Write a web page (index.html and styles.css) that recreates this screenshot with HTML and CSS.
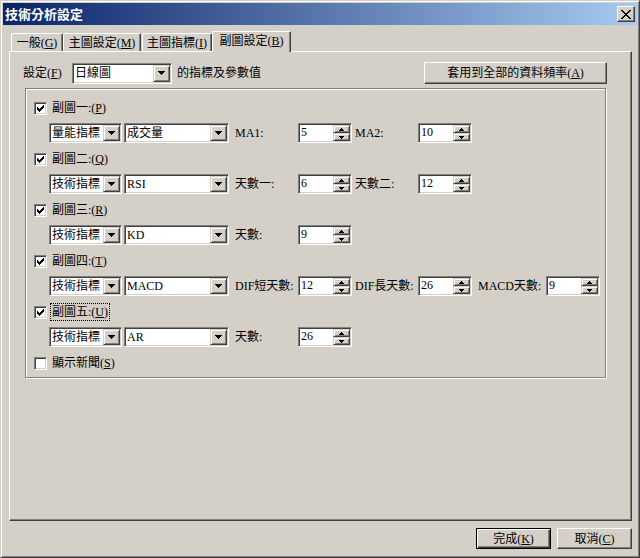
FILE: index.html
```html
<!DOCTYPE html>
<html>
<head>
<meta charset="utf-8">
<link rel="stylesheet" href="styles.css">
</head>
<body>
<div class="window">
  <div class="titlebar">
    <span class="title">技術分析設定</span>
    <span class="close"><svg width="10" height="9" viewBox="0 0 10 9"><path d="M0 0h2v1H0zM8 0h2v1H8zM1 1h2v1H1zM7 1h2v1H7zM2 2h2v1H2zM6 2h2v1H6zM3 3h4v1H3zM4 4h2v1H4zM3 5h4v1H3zM2 6h2v1H2zM6 6h2v1H6zM1 7h2v1H1zM7 7h2v1H7zM0 8h2v1H0zM8 8h2v1H8z"/></svg></span>
  </div>
  <div class="client">
    <div class="tabs">
      <div class="tab t1">一般(<u>G</u>)</div>
      <div class="tab t2">主圖設定(<u>M</u>)</div>
      <div class="tab t3">主圖指標(<u>I</u>)</div>
      <div class="tab t4 sel">副圖設定(<u>B</u>)</div>
    </div>
    <div class="panel">
      <div class="toprow">
        <span class="set-lbl">設定(<u>F</u>)</span>
        <div class="combo c-freq"><span class="val">日線圖</span><span class="dd"><svg width="7" height="4" viewBox="0 0 7 4"><path d="M0 0h7v1H0zM1 1h5v1H1zM2 2h3v1H2zM3 3h1v1H3z"/></svg></span></div>
        <span class="after">的指標及參數值</span>
        <div class="btn apply">套用到全部的資料頻率(<u>A</u>)</div>
      </div>
      <div class="group">
        <div class="cbrow"><span class="chk"><svg width="7" height="7" viewBox="0 0 7 7"><path d="M0 2h1v3H0zM1 3h1v3H1zM2 4h1v3H2zM3 3h1v3H3zM4 2h1v3H4zM5 1h1v3H5zM6 0h1v3H6z"/></svg></span><span class="cblbl">副圖一:(<u>P</u>)</span></div>
        <div class="ctlrow">
          <div class="combo c-type"><span class="val">量能指標</span><span class="dd"><svg width="7" height="4" viewBox="0 0 7 4"><path d="M0 0h7v1H0zM1 1h5v1H1zM2 2h3v1H2zM3 3h1v1H3z"/></svg></span></div>
          <div class="combo c-ind"><span class="val">成交量</span><span class="dd"><svg width="7" height="4" viewBox="0 0 7 4"><path d="M0 0h7v1H0zM1 1h5v1H1zM2 2h3v1H2zM3 3h1v1H3z"/></svg></span></div>
          <span class="plbl l1">MA1:</span>
          <div class="spin"><span class="v">5</span><span class="sbs"><span class="sb"><svg width="5" height="3" viewBox="0 0 5 3"><path d="M2 0h1v1H2zM1 1h3v1H1zM0 2h5v1H0z"/></svg></span><span class="sb"><svg width="5" height="3" viewBox="0 0 5 3"><path d="M0 0h5v1H0zM1 1h3v1H1zM2 2h1v1H2z"/></svg></span></span></div>
          <span class="plbl l2">MA2:</span>
          <div class="spin"><span class="v">10</span><span class="sbs"><span class="sb"><svg width="5" height="3" viewBox="0 0 5 3"><path d="M2 0h1v1H2zM1 1h3v1H1zM0 2h5v1H0z"/></svg></span><span class="sb"><svg width="5" height="3" viewBox="0 0 5 3"><path d="M0 0h5v1H0zM1 1h3v1H1zM2 2h1v1H2z"/></svg></span></span></div>
        </div>
        <div class="cbrow"><span class="chk"><svg width="7" height="7" viewBox="0 0 7 7"><path d="M0 2h1v3H0zM1 3h1v3H1zM2 4h1v3H2zM3 3h1v3H3zM4 2h1v3H4zM5 1h1v3H5zM6 0h1v3H6z"/></svg></span><span class="cblbl">副圖二:(<u>Q</u>)</span></div>
        <div class="ctlrow">
          <div class="combo c-type"><span class="val">技術指標</span><span class="dd"><svg width="7" height="4" viewBox="0 0 7 4"><path d="M0 0h7v1H0zM1 1h5v1H1zM2 2h3v1H2zM3 3h1v1H3z"/></svg></span></div>
          <div class="combo c-ind"><span class="val">RSI</span><span class="dd"><svg width="7" height="4" viewBox="0 0 7 4"><path d="M0 0h7v1H0zM1 1h5v1H1zM2 2h3v1H2zM3 3h1v1H3z"/></svg></span></div>
          <span class="plbl l1">天數一:</span>
          <div class="spin"><span class="v">6</span><span class="sbs"><span class="sb"><svg width="5" height="3" viewBox="0 0 5 3"><path d="M2 0h1v1H2zM1 1h3v1H1zM0 2h5v1H0z"/></svg></span><span class="sb"><svg width="5" height="3" viewBox="0 0 5 3"><path d="M0 0h5v1H0zM1 1h3v1H1zM2 2h1v1H2z"/></svg></span></span></div>
          <span class="plbl l2">天數二:</span>
          <div class="spin"><span class="v">12</span><span class="sbs"><span class="sb"><svg width="5" height="3" viewBox="0 0 5 3"><path d="M2 0h1v1H2zM1 1h3v1H1zM0 2h5v1H0z"/></svg></span><span class="sb"><svg width="5" height="3" viewBox="0 0 5 3"><path d="M0 0h5v1H0zM1 1h3v1H1zM2 2h1v1H2z"/></svg></span></span></div>
        </div>
        <div class="cbrow"><span class="chk"><svg width="7" height="7" viewBox="0 0 7 7"><path d="M0 2h1v3H0zM1 3h1v3H1zM2 4h1v3H2zM3 3h1v3H3zM4 2h1v3H4zM5 1h1v3H5zM6 0h1v3H6z"/></svg></span><span class="cblbl">副圖三:(<u>R</u>)</span></div>
        <div class="ctlrow">
          <div class="combo c-type"><span class="val">技術指標</span><span class="dd"><svg width="7" height="4" viewBox="0 0 7 4"><path d="M0 0h7v1H0zM1 1h5v1H1zM2 2h3v1H2zM3 3h1v1H3z"/></svg></span></div>
          <div class="combo c-ind"><span class="val">KD</span><span class="dd"><svg width="7" height="4" viewBox="0 0 7 4"><path d="M0 0h7v1H0zM1 1h5v1H1zM2 2h3v1H2zM3 3h1v1H3z"/></svg></span></div>
          <span class="plbl l1">天數:</span>
          <div class="spin"><span class="v">9</span><span class="sbs"><span class="sb"><svg width="5" height="3" viewBox="0 0 5 3"><path d="M2 0h1v1H2zM1 1h3v1H1zM0 2h5v1H0z"/></svg></span><span class="sb"><svg width="5" height="3" viewBox="0 0 5 3"><path d="M0 0h5v1H0zM1 1h3v1H1zM2 2h1v1H2z"/></svg></span></span></div>
        </div>
        <div class="cbrow"><span class="chk"><svg width="7" height="7" viewBox="0 0 7 7"><path d="M0 2h1v3H0zM1 3h1v3H1zM2 4h1v3H2zM3 3h1v3H3zM4 2h1v3H4zM5 1h1v3H5zM6 0h1v3H6z"/></svg></span><span class="cblbl">副圖四:(<u>T</u>)</span></div>
        <div class="ctlrow">
          <div class="combo c-type"><span class="val">技術指標</span><span class="dd"><svg width="7" height="4" viewBox="0 0 7 4"><path d="M0 0h7v1H0zM1 1h5v1H1zM2 2h3v1H2zM3 3h1v1H3z"/></svg></span></div>
          <div class="combo c-ind"><span class="val">MACD</span><span class="dd"><svg width="7" height="4" viewBox="0 0 7 4"><path d="M0 0h7v1H0zM1 1h5v1H1zM2 2h3v1H2zM3 3h1v1H3z"/></svg></span></div>
          <span class="plbl l1">DIF短天數:</span>
          <div class="spin"><span class="v">12</span><span class="sbs"><span class="sb"><svg width="5" height="3" viewBox="0 0 5 3"><path d="M2 0h1v1H2zM1 1h3v1H1zM0 2h5v1H0z"/></svg></span><span class="sb"><svg width="5" height="3" viewBox="0 0 5 3"><path d="M0 0h5v1H0zM1 1h3v1H1zM2 2h1v1H2z"/></svg></span></span></div>
          <span class="plbl l2">DIF長天數:</span>
          <div class="spin"><span class="v">26</span><span class="sbs"><span class="sb"><svg width="5" height="3" viewBox="0 0 5 3"><path d="M2 0h1v1H2zM1 1h3v1H1zM0 2h5v1H0z"/></svg></span><span class="sb"><svg width="5" height="3" viewBox="0 0 5 3"><path d="M0 0h5v1H0zM1 1h3v1H1zM2 2h1v1H2z"/></svg></span></span></div>
          <span class="plbl l3">MACD天數:</span>
          <div class="spin"><span class="v">9</span><span class="sbs"><span class="sb"><svg width="5" height="3" viewBox="0 0 5 3"><path d="M2 0h1v1H2zM1 1h3v1H1zM0 2h5v1H0z"/></svg></span><span class="sb"><svg width="5" height="3" viewBox="0 0 5 3"><path d="M0 0h5v1H0zM1 1h3v1H1zM2 2h1v1H2z"/></svg></span></span></div>
        </div>
        <div class="cbrow"><span class="chk"><svg width="7" height="7" viewBox="0 0 7 7"><path d="M0 2h1v3H0zM1 3h1v3H1zM2 4h1v3H2zM3 3h1v3H3zM4 2h1v3H4zM5 1h1v3H5zM6 0h1v3H6z"/></svg></span><span class="cblbl focus">副圖五:(<u>U</u>)</span></div>
        <div class="ctlrow">
          <div class="combo c-type"><span class="val">技術指標</span><span class="dd"><svg width="7" height="4" viewBox="0 0 7 4"><path d="M0 0h7v1H0zM1 1h5v1H1zM2 2h3v1H2zM3 3h1v1H3z"/></svg></span></div>
          <div class="combo c-ind"><span class="val">AR</span><span class="dd"><svg width="7" height="4" viewBox="0 0 7 4"><path d="M0 0h7v1H0zM1 1h5v1H1zM2 2h3v1H2zM3 3h1v1H3z"/></svg></span></div>
          <span class="plbl l1">天數:</span>
          <div class="spin"><span class="v">26</span><span class="sbs"><span class="sb"><svg width="5" height="3" viewBox="0 0 5 3"><path d="M2 0h1v1H2zM1 1h3v1H1zM0 2h5v1H0z"/></svg></span><span class="sb"><svg width="5" height="3" viewBox="0 0 5 3"><path d="M0 0h5v1H0zM1 1h3v1H1zM2 2h1v1H2z"/></svg></span></span></div>
        </div>
        <div class="cbrow"><span class="chk"></span><span class="cblbl">顯示新聞(<u>S</u>)</span></div>
      </div>
    </div>
    <div class="footer">
      <div class="btn fbtn default">完成(<u>K</u>)</div>
      <div class="btn fbtn">取消(<u>C</u>)</div>
    </div>
  </div>
</div>
</body>
</html>
```

FILE: styles.css
```css
html, body {
  margin: 0;
  padding: 0;
  background: #d4d0c8;
}

.window {
  width: 640px;
  height: 558px;
  box-sizing: border-box;
  background: #d4d0c8;
  border: 1px solid;
  border-color: #d4d0c8 #404040 #404040 #d4d0c8;
  box-shadow: inset 1px 1px #fff, inset -1px -1px #808080;
  padding: 2px;
  font-family: "Liberation Serif", "Noto Sans CJK TC", serif;
  font-size: 12px;
  line-height: 14px;
  color: #000;
  display: flex;
  flex-direction: column;
}

u {
  text-decoration: underline;
  text-underline-offset: 1px;
}

.titlebar {
  height: 22px;
  flex: none;
  display: flex;
  align-items: center;
  justify-content: space-between;
  padding: 0 2px;
  background: linear-gradient(to right, #0a246a, #a6caf0);
  color: #fff;
}

.title {
  font-family: "Noto Sans CJK TC", sans-serif;
  font-weight: bold;
  font-size: 13px;
  line-height: 16px;
}

.close {
  width: 18px;
  height: 16px;
  box-sizing: border-box;
  background: #d4d0c8;
  border: 1px solid;
  border-color: #fff #404040 #404040 #fff;
  box-shadow: inset -1px -1px #808080;
  display: flex;
  align-items: center;
  justify-content: center;
}

.close svg {
  fill: #000;
  shape-rendering: crispEdges;
}

.client {
  padding: 0 5px 0 6px;
}

.tabs {
  height: 26px;
  display: flex;
  align-items: flex-end;
  padding-left: 2px;
}

.tab {
  height: 18px;
  box-sizing: border-box;
  border: 1px solid;
  border-bottom: 0;
  border-color: #fff #404040 transparent #fff;
  box-shadow: inset -1px 0 #808080;
  border-radius: 2px 2px 0 0;
  display: flex;
  align-items: center;
  justify-content: center;
  background: #d4d0c8;
  white-space: nowrap;
}

.t1 { width: 52px; }
.t2 { width: 78px; }
.t3 { width: 70px; margin-left: 1px; }
.t4 { width: 79px; }

.tab.sel {
  height: 21px;
  margin-bottom: -1px;
  z-index: 1;
  padding-bottom: 2px;
}

.panel {
  width: 623px;
  height: 470px;
  box-sizing: border-box;
  border: 1px solid;
  border-color: #fff #404040 #404040 #fff;
  box-shadow: inset -1px -1px #808080;
  padding: 10px 24px 0 13px;
}

.toprow {
  height: 22px;
  display: flex;
  align-items: center;
}

.set-lbl {
  width: 49px;
  flex: none;
}

.after {
  margin-left: 5px;
}

.combo {
  height: 20px;
  box-sizing: border-box;
  background: #fff;
  border: 1px solid;
  border-color: #808080 #fff #fff #808080;
  box-shadow: inset 1px 1px #404040, inset -1px -1px #d4d0c8;
  padding: 1px;
  display: flex;
  flex: none;
}

.combo .val {
  flex: 1;
  padding-left: 1px;
  line-height: 16px;
  white-space: nowrap;
  overflow: hidden;
}

.combo .dd {
  width: 17px;
  flex: none;
  box-sizing: border-box;
  background: #d4d0c8;
  border: 1px solid;
  border-color: #d4d0c8 #404040 #404040 #d4d0c8;
  box-shadow: inset 1px 1px #fff, inset -1px -1px #808080;
  display: flex;
  align-items: center;
  justify-content: center;
}

.combo svg, .sb svg, .chk svg {
  fill: #000;
  shape-rendering: crispEdges;
}

.c-freq {
  width: 100px;
  height: 21px;
}

.c-type { width: 73px; }
.c-ind { width: 105px; margin-left: 2px; }

.btn {
  box-sizing: border-box;
  background: #d4d0c8;
  border: 1px solid;
  border-color: #fff #404040 #404040 #fff;
  box-shadow: inset -1px -1px #808080;
  display: flex;
  align-items: center;
  justify-content: center;
  white-space: nowrap;
}

.apply {
  margin-left: auto;
  width: 183px;
  height: 22px;
}

.group {
  margin: 4px 0 0 2px;
  width: 581px;
  box-sizing: border-box;
  border: 1px solid #808080;
  box-shadow: inset 1px 1px #fff, 1px 1px #fff;
  padding: 6px 0 1px 0;
}

.cbrow {
  height: 26px;
  display: flex;
  align-items: center;
  padding-left: 8px;
}

.chk {
  width: 13px;
  height: 13px;
  box-sizing: border-box;
  background: #fff;
  border: 1px solid;
  border-color: #808080 #fff #fff #808080;
  box-shadow: inset 1px 1px #404040, inset -1px -1px #d4d0c8;
  padding: 2px;
  display: flex;
  flex: none;
}

.cblbl {
  margin-left: 5px;
  white-space: nowrap;
}

.cblbl.focus {
  margin-left: 3px;
  padding: 1px 1px;
  border: 1px dotted #000;
}

.ctlrow {
  height: 25px;
  box-sizing: border-box;
  display: flex;
  align-items: flex-start;
  padding: 2px 0 0 23px;
}

.plbl {
  height: 20px;
  display: flex;
  align-items: center;
  white-space: nowrap;
  flex: none;
}

.l1 { width: 63px; margin-left: 6px; }
.l2 { width: 63px; margin-left: 3px; }
.l3 { width: 68px; margin-left: 6px; }

.spin {
  width: 54px;
  height: 20px;
  box-sizing: border-box;
  background: #fff;
  border: 1px solid;
  border-color: #808080 #fff #fff #808080;
  box-shadow: inset 1px 1px #404040, inset -1px -1px #d4d0c8;
  padding: 1px;
  display: flex;
  flex: none;
}

.spin .v {
  flex: 1;
  padding-left: 1px;
  line-height: 15px;
}

.sbs {
  width: 17px;
  flex: none;
  display: flex;
  flex-direction: column;
}

.sb {
  flex: 1;
  box-sizing: border-box;
  background: #d4d0c8;
  border: 1px solid;
  border-color: #d4d0c8 #404040 #404040 #d4d0c8;
  box-shadow: inset 1px 1px #fff, inset -1px -1px #808080;
  display: flex;
  align-items: center;
  justify-content: center;
}

.footer {
  display: flex;
  justify-content: flex-end;
  gap: 6px;
  margin-top: 7px;
}

.fbtn {
  width: 75px;
  height: 21px;
}

.fbtn.default {
  border: 1px solid #000;
  box-shadow: inset 1px 1px #fff, inset -1px -1px #404040, inset -2px -2px #808080;
}
```
